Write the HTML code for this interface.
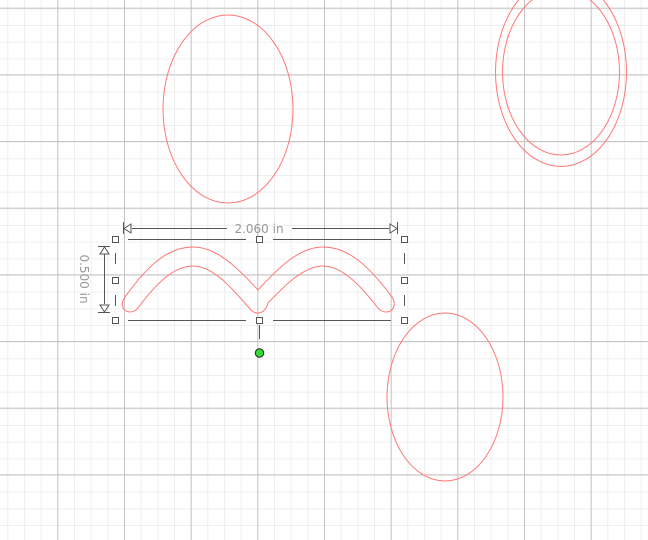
<!DOCTYPE html>
<html><head><meta charset="utf-8"><style>
html,body{margin:0;padding:0;background:#fff;overflow:hidden}
svg{display:block}
text{font-family:"DejaVu Sans","Liberation Sans",sans-serif;font-size:12px;fill:#999}
</style></head><body>
<svg width="648" height="540" viewBox="0 0 648 540" xmlns="http://www.w3.org/2000/svg">
<defs>
<pattern id="minor" x="7.33" y="8.33" width="16.667" height="16.667" patternUnits="userSpaceOnUse">
<path d="M0.5 0V16.667M0 0.5H16.667" stroke="#eeeeee" stroke-width="1" fill="none"/>
</pattern>
<pattern id="major" x="57.33" y="74.33" width="66.667" height="66.667" patternUnits="userSpaceOnUse">
<path d="M0.5 0V66.667M0 0.5H66.667" stroke="#c4c4c4" stroke-width="1" fill="none"/>
</pattern>
</defs>
<rect width="648" height="540" fill="#fff"/>
<rect width="648" height="540" fill="url(#minor)"/>
<rect width="648" height="540" fill="url(#major)"/>

<g fill="none" stroke="#f77" stroke-width="1">
<ellipse cx="228" cy="109" rx="65" ry="94"/>
<ellipse cx="561" cy="72" rx="65.5" ry="94.5"/>
<ellipse cx="561" cy="72" rx="58.5" ry="83"/>
<ellipse cx="445" cy="397" rx="58" ry="84"/>
<path d="M130,312 C124,312 119,305 125,297 C150,262 170,247 193,247 C216,247 236,266 258,290 C280,266 300,247 323,247 C346,247 366,262 392,297 C397,305 393,312 386,312 C382,312 380,310 378,308 C360,285 342,266 323,266 C304,266 285,285 268,303 C266,310 262,313 258,313 C254,313 252,311 250,309 C232,288 213,266 193,266 C173,266 155,285 138,308 C136,310 134,312 130,312 Z"/>
</g>

<g stroke="#555" stroke-width="1" fill="none">
<path d="M123.5 222V234M397.5 222V234"/>
<path d="M132 228.5H227M292 228.5H389"/>
<path d="M124 228.5L131 224V233Z M397 228.5L390 224V233Z" fill="#fff"/>
<path d="M98 246.5H110M98 312.5H110"/>
<path d="M104.5 254V304"/>
<path d="M104.5 247L100 254H109Z M104.5 312L100 305H109Z" fill="#fff"/>
<path d="M128 239.5H246M273 239.5H391M128 320.5H246M273 320.5H391"/>
<path d="M115.5 253V264M115.5 295V306M404.5 253V264M404.5 295V306"/>
<path d="M259.5 325V339"/>
</g>
<g stroke="#555" stroke-width="1" fill="#fff">
<rect x="112.5" y="236.5" width="6" height="6"/>
<rect x="256.5" y="236.5" width="6" height="6"/>
<rect x="401.5" y="236.5" width="6" height="6"/>
<rect x="112.5" y="277.5" width="6" height="6"/>
<rect x="401.5" y="277.5" width="6" height="6"/>
<rect x="112.5" y="317.5" width="6" height="6"/>
<rect x="256.5" y="317.5" width="6" height="6"/>
<rect x="401.5" y="317.5" width="6" height="6"/>
</g>
<circle cx="259.5" cy="353" r="4.2" fill="#33dd33" stroke="#222" stroke-width="1"/>

<text x="259" y="233" text-anchor="middle">2.060 in</text>
<text x="0" y="0" text-anchor="middle" transform="translate(80,279) rotate(90)">0.500 in</text>
</svg>
</body></html>
